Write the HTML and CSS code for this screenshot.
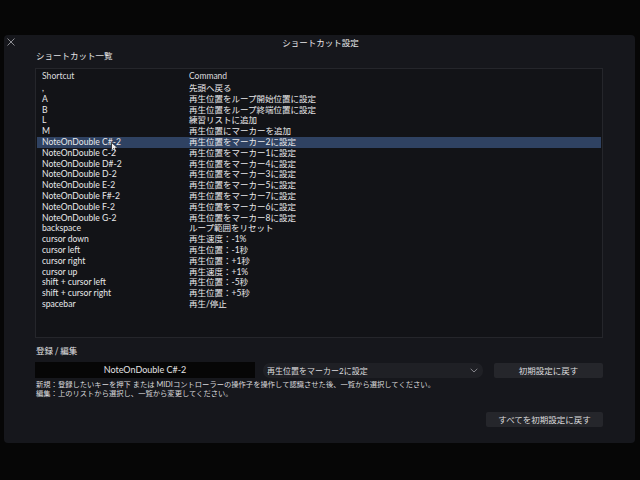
FILE: index.html
```html
<!DOCTYPE html>
<html lang="ja">
<head>
<meta charset="utf-8">
<title>ショートカット設定</title>
<link rel="stylesheet" href="styles.css">
</head>
<body>
<div class="window">
  <div class="titlebar">
    <span class="close">
      <svg width="8" height="8" viewBox="0 0 8 8"><path d="M0.5 0.5 L7.5 7.5 M7.5 0.5 L0.5 7.5" stroke="#9a9ba0" stroke-width="0.9" fill="none"/></svg>
    </span>
    <span class="title">ショートカット設定</span>
    <span></span>
  </div>
  <div class="content">
    <div class="section-title">ショートカット一覧</div>
    <div class="list">
      <div class="row head"><span class="c1">Shortcut</span><span class="c2">Command</span></div>
      <div class="row"><span class="c1">,</span><span class="c2">先頭へ戻る</span></div>
      <div class="row"><span class="c1">A</span><span class="c2">再生位置をループ開始位置に設定</span></div>
      <div class="row"><span class="c1">B</span><span class="c2">再生位置をループ終端位置に設定</span></div>
      <div class="row"><span class="c1">L</span><span class="c2">練習リストに追加</span></div>
      <div class="row"><span class="c1">M</span><span class="c2">再生位置にマーカーを追加</span></div>
      <div class="row selected"><span class="c1">NoteOnDouble C#-2</span><span class="c2">再生位置をマーカー2に設定</span>
        <svg class="pointer" width="8" height="11" viewBox="0 0 8 11"><path d="M0.5 0.5 L0.5 8.5 L2.6 6.6 L4 9.8 L5.4 9.2 L4 6.1 L6.8 6.1 Z" fill="#f2f2f2" stroke="#111" stroke-width="0.7"/></svg>
      </div>
      <div class="row"><span class="c1">NoteOnDouble C-2</span><span class="c2">再生位置をマーカー1に設定</span></div>
      <div class="row"><span class="c1">NoteOnDouble D#-2</span><span class="c2">再生位置をマーカー4に設定</span></div>
      <div class="row"><span class="c1">NoteOnDouble D-2</span><span class="c2">再生位置をマーカー3に設定</span></div>
      <div class="row"><span class="c1">NoteOnDouble E-2</span><span class="c2">再生位置をマーカー5に設定</span></div>
      <div class="row"><span class="c1">NoteOnDouble F#-2</span><span class="c2">再生位置をマーカー7に設定</span></div>
      <div class="row"><span class="c1">NoteOnDouble F-2</span><span class="c2">再生位置をマーカー6に設定</span></div>
      <div class="row"><span class="c1">NoteOnDouble G-2</span><span class="c2">再生位置をマーカー8に設定</span></div>
      <div class="row"><span class="c1">backspace</span><span class="c2">ループ範囲をリセット</span></div>
      <div class="row"><span class="c1">cursor down</span><span class="c2">再生速度：-1%</span></div>
      <div class="row"><span class="c1">cursor left</span><span class="c2">再生位置：-1秒</span></div>
      <div class="row"><span class="c1">cursor right</span><span class="c2">再生位置：+1秒</span></div>
      <div class="row"><span class="c1">cursor up</span><span class="c2">再生速度：+1%</span></div>
      <div class="row"><span class="c1">shift + cursor left</span><span class="c2">再生位置：-5秒</span></div>
      <div class="row"><span class="c1">shift + cursor right</span><span class="c2">再生位置：+5秒</span></div>
      <div class="row"><span class="c1">spacebar</span><span class="c2">再生/停止</span></div>
    </div>
    <div class="section-title edit-title">登録 / 編集</div>
    <div class="edit-row">
      <div class="key-input">NoteOnDouble C#-2</div>
      <div class="select">
        <span>再生位置をマーカー2に設定</span>
        <svg width="8" height="5" viewBox="0 0 8 5"><path d="M0.7 0.8 L4 4 L7.3 0.8" stroke="#8e8f95" stroke-width="0.9" fill="none"/></svg>
      </div>
      <div class="btn reset">初期設定に戻す</div>
    </div>
    <div class="help">
      <div>新規：登録したいキーを押下 または MIDIコントローラーの操作子を操作して認識させた後、一覧から選択してください。</div>
      <div>編集：上のリストから選択し、一覧から変更してください。</div>
    </div>
    <div class="footer">
      <div class="btn reset-all">すべてを初期設定に戻す</div>
    </div>
  </div>
</div>
</body>
</html>
```

FILE: styles.css
```css
html, body {
  margin: 0;
  padding: 0;
  background: #060606;
  width: 640px;
  height: 480px;
  overflow: hidden;
  font-family: "Lato", "Noto Sans CJK JP", sans-serif;
  color: #e8e8ea;
}

.window {
  margin: 35px 0 0 4px;
  width: 631px;
  height: 408px;
  background: #16171c;
  border-radius: 4px;
  display: flex;
  flex-direction: column;
}

.titlebar {
  height: 14px;
  display: grid;
  grid-template-columns: 1fr auto 1fr;
  align-items: center;
}

.close {
  padding-left: 3px;
  display: flex;
  align-items: center;
}

.title {
  font-family: "Noto Sans CJK JP", sans-serif;
  font-size: 8.5px;
  line-height: 14px;
  color: #e8e8ea;
  padding-left: 2px;
}

.content {
  padding: 0 32px 0 31px;
  display: flex;
  flex-direction: column;
}

.section-title {
  font-family: "Noto Sans CJK JP", sans-serif;
  font-size: 8.5px;
  line-height: 12px;
  color: #e4e4e6;
  padding-left: 1px;
}

.list {
  margin-top: 7px;
  height: 268px;
  border: 1px solid #25262b;
  background: #121317;
  padding: 0 1px;
}

.row {
  position: relative;
  display: flex;
  height: 10.8px;
  line-height: 10.8px;
  font-size: 8.6px;
  padding-left: 5px;
  white-space: nowrap;
}

.row.head {
  height: 14px;
  line-height: 14px;
  color: #dcdcde;
}

.row.selected {
  background: #2f4262;
}

.c1 {
  width: 147px;
}

.c2 {
  font-size: 8.5px;
}

.pointer {
  position: absolute;
  left: 74px;
  top: 5px;
}

.edit-title {
  margin-top: 6px;
}

.edit-row {
  margin-top: 6px;
  display: flex;
  align-items: center;
  height: 16px;
}

.key-input {
  width: 220px;
  height: 16px;
  line-height: 16px;
  background: #060606;
  text-align: center;
  font-size: 9px;
  color: #e2e2e4;
}

.select {
  margin-left: 8px;
  width: 220px;
  height: 15px;
  border-radius: 7px;
  background: #1f2025;
  display: flex;
  align-items: center;
  justify-content: space-between;
  padding: 0 5px 0 4px;
  box-sizing: border-box;
  font-size: 8px;
  color: #dcdcde;
}

.btn {
  background: #25262b;
  border-radius: 2px;
  text-align: center;
  font-family: "Noto Sans CJK JP", sans-serif;
  font-size: 8.5px;
  color: #dcdcde;
  height: 15px;
  line-height: 15px;
}

.reset {
  margin-left: 11px;
  width: 109px;
}

.help {
  margin-top: 2px;
  font-size: 7.3px;
  line-height: 9px;
  color: #dadadc;
  padding-left: 1px;
  white-space: nowrap;
}

.footer {
  margin-top: 14px;
  display: flex;
  justify-content: flex-end;
}

.reset-all {
  width: 117px;
}
```
